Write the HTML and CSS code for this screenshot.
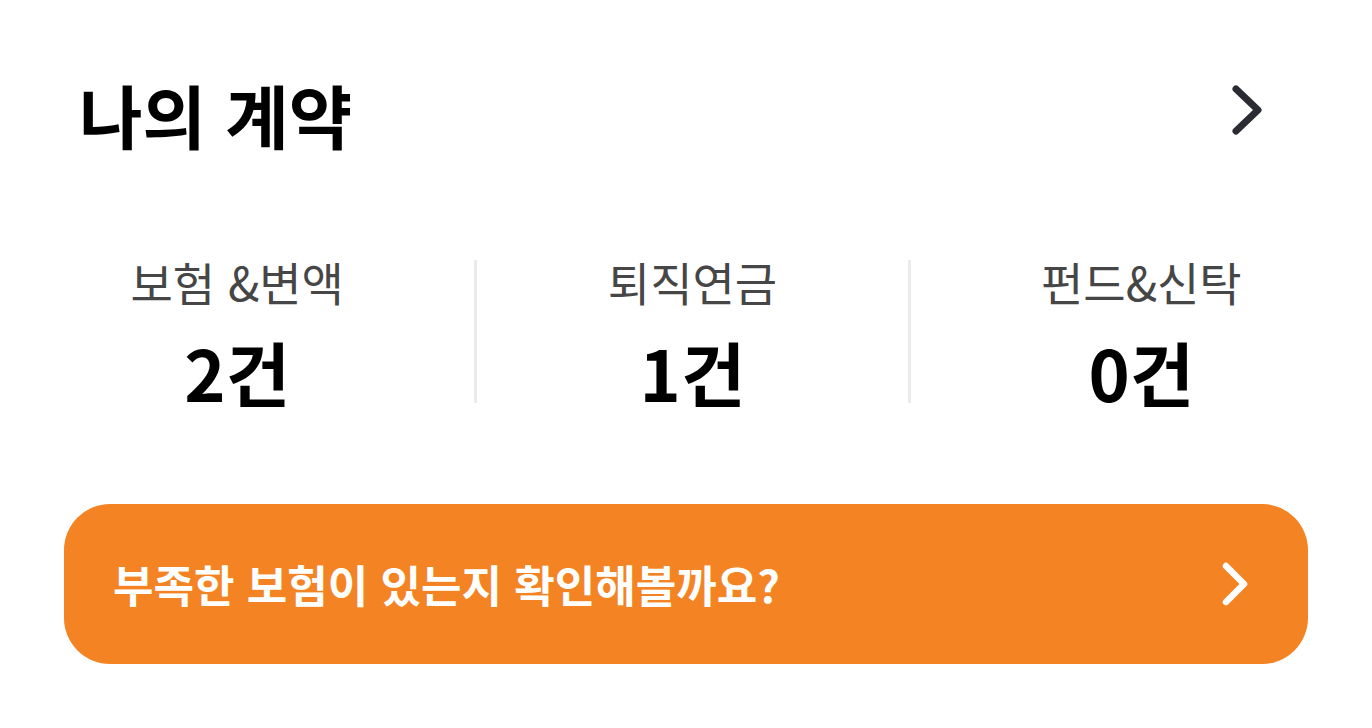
FILE: index.html
```html
<!DOCTYPE html>
<html lang="ko">
<head>
<meta charset="utf-8">
<link rel="stylesheet" href="styles.css">
</head>
<body>
<main class="page">
  <header class="header">
    <h1 class="title">나의 계약</h1>
    <svg class="chev" width="30" height="50" viewBox="0 0 30 50"><path d="M4 4 L26 25 L4 46" fill="none" stroke="#2b2b33" stroke-width="7" stroke-linecap="round" stroke-linejoin="round"/></svg>
  </header>
  <section class="stats">
    <div class="stat">
      <div class="label">보험 &amp;변액</div>
      <div class="count">2건</div>
    </div>
    <div class="stat divided">
      <div class="label">퇴직연금</div>
      <div class="count">1건</div>
    </div>
    <div class="stat divided">
      <div class="label">펀드&amp;신탁</div>
      <div class="count">0건</div>
    </div>
  </section>
  <button class="cta">
    <span class="cta-text">부족한 보험이 있는지 확인해볼까요?</span>
    <svg class="cta-chev" width="28" height="44" viewBox="0 0 28 44"><path d="M4 4 L22 22 L4 40" fill="none" stroke="#ffffff" stroke-width="6.5" stroke-linecap="round" stroke-linejoin="round"/></svg>
  </button>
</main>
</body>
</html>
```
FILE: styles.css
```css
* { box-sizing: border-box; }
html, body { margin: 0; padding: 0; background: #ffffff; }
body {
  font-family: "Noto Sans CJK KR", "Noto Sans", sans-serif;
  width: 1372px;
  height: 728px;
  overflow: hidden;
}
.page {
  padding: 74px 64px 0 64px;
}
.header {
  display: flex;
  justify-content: space-between;
  align-items: center;
  padding: 0 46px 0 15px;
}
.title {
  margin: 0;
  font-size: 69px;
  font-weight: 700;
  line-height: 80px;
  color: #000000;
}
.chev { display: block; margin-bottom: 8px; }
.stats {
  display: flex;
  margin: 106px -64px 0 -64px;
}
.stat {
  flex: 1 1 auto;
  display: flex;
  flex-direction: column;
  align-items: center;
}
.divided { border-left: 3px solid #ebebeb; }
.label {
  font-size: 46px;
  line-height: 42px;
  color: #464646;
  font-weight: 400;
}
.count {
  margin-top: 39px;
  font-size: 70px;
  line-height: 62px;
  font-weight: 700;
  color: #000000;
}
.cta {
  margin-top: 101px;
  width: 100%;
  height: 160px;
  border: none;
  border-radius: 46px;
  background: #f48423;
  display: flex;
  align-items: center;
  justify-content: space-between;
  padding: 0 58px 0 49px;
  font-family: inherit;
}
.cta-text {
  color: #ffffff;
  font-size: 44px;
  font-weight: 700;
}
.cta-chev { display: block; }
```
